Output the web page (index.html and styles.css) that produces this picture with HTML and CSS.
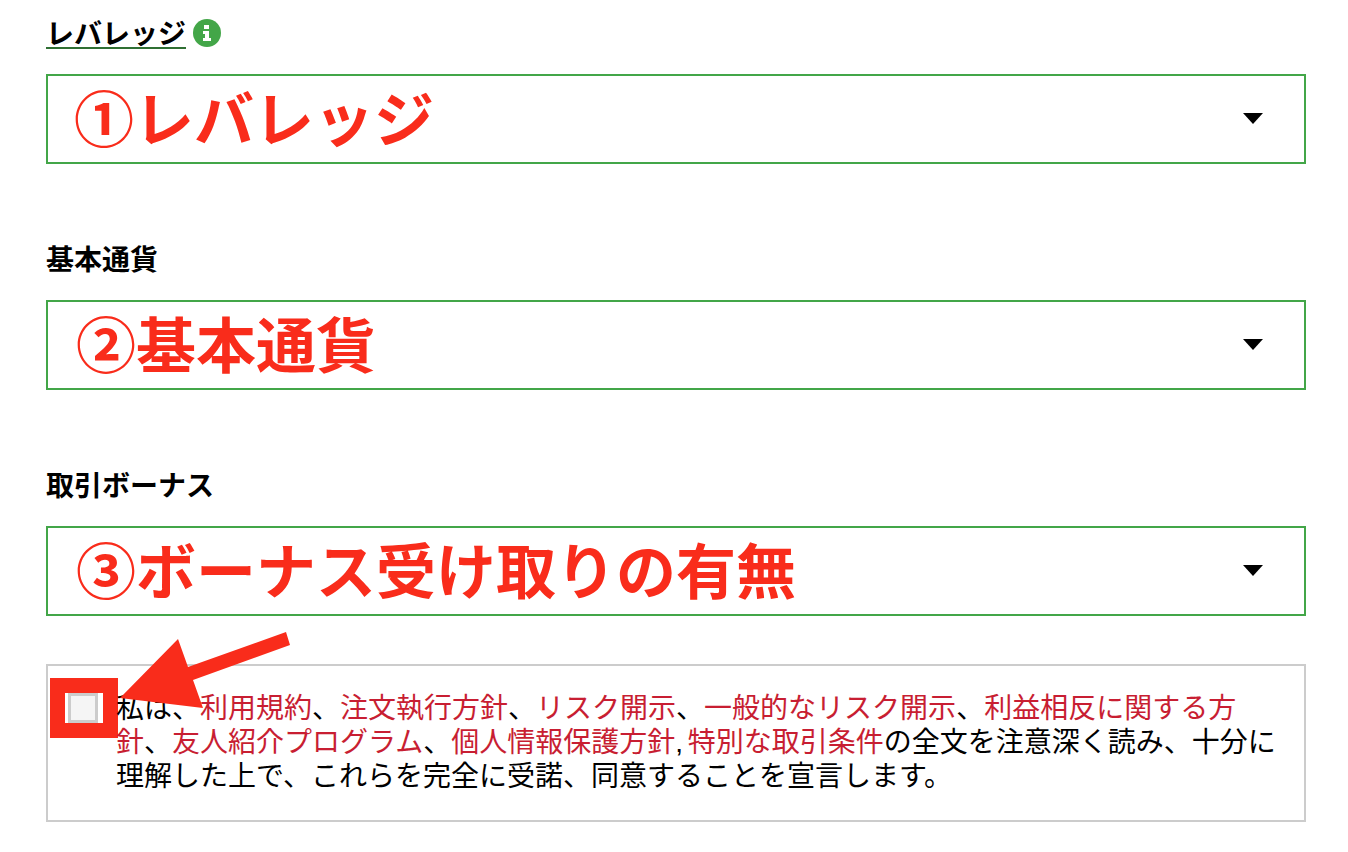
FILE: index.html
```html
<!DOCTYPE html>
<html lang="ja">
<head>
    <meta charset="UTF-8">
    <title>口座開設</title>
    <link rel="stylesheet" href="styles.css">
</head>
<body>
    <div class="form">
        <div class="field">
            <div class="field-label">
                <span class="label-text underlined">レバレッジ</span>
                <svg class="info-icon" viewBox="0 0 28 28">
                    <circle cx="14" cy="14" r="14" fill="#43a648"/>
                    <rect x="11" y="6" width="5" height="4" fill="#fff"/>
                    <path d="M10 12h6v7h2v3h-8v-3h2v-4h-2z" fill="#fff"/>
                </svg>
            </div>
            <div class="select-box">
                <span class="note note-first">①レバレッジ</span>
                <span class="caret"></span>
            </div>
        </div>

        <div class="field">
            <div class="field-label">
                <span class="label-text">基本通貨</span>
            </div>
            <div class="select-box">
                <span class="note">②基本通貨</span>
                <span class="caret"></span>
            </div>
        </div>

        <div class="field field-last">
            <div class="field-label">
                <span class="label-text">取引ボーナス</span>
            </div>
            <div class="select-box">
                <span class="note">③ボーナス受け取りの有無</span>
                <span class="caret"></span>
            </div>
        </div>

        <div class="agree-box">
            <span class="check"><span class="check-input"></span></span>
            <p class="agree-text">私は、<a href="#">利用規約</a>、<a href="#">注文執行方針</a>、<a href="#">リスク開示</a>、<a href="#">一般的なリスク開示</a>、<a href="#">利益相反に関する方針</a>、<a href="#">友人紹介プログラム</a>、<a href="#">個人情報保護方針</a>, <a href="#">特別な取引条件</a>の全文を注意深く読み、十分に理解した上で、これらを完全に受諾、同意することを宣言します。</p>
        </div>
    </div>

    <!-- Arrow pointing at the checkbox -->
    <svg class="arrow" width="1348" height="852" viewBox="0 0 1348 852">
        <polygon points="120,698 178,639 188,667 286,632 290,645 193,680 203,708" fill="#f92c1b"/>
    </svg>
</body>
</html>
```

FILE: styles.css
```css
body {
    margin: 0;
    background-color: #fff;
    color: #000;
    font-family: "Liberation Sans", "Noto Sans CJK JP", sans-serif;
}

.form {
    width: 1260px;
    margin-left: 46px;
    padding-top: 23px;
}

.field {
    margin-bottom: 85px;
}

.field-last {
    margin-bottom: 48px;
}

.field-label {
    display: flex;
    align-items: flex-start;
    gap: 7px;
    height: 34px;
    margin-bottom: 17px;
}

.label-text {
    font-size: 28px;
    line-height: 24px;
    font-weight: 700;
}

.underlined {
    border-bottom: 2px solid #2f6f33;
}

.info-icon {
    width: 28px;
    height: 28px;
    margin-top: -4px;
}

.select-box {
    display: flex;
    align-items: center;
    justify-content: space-between;
    box-sizing: border-box;
    height: 90px;
    padding: 0 41px 0 28px;
    border: 2px solid #43a648;
}

.note {
    padding-top: 6px;
    font-size: 60px;
    font-weight: 700;
    line-height: 80px;
    color: #f92c1b;
}

.note-first {
    margin-left: -2px;
}

.caret {
    width: 0;
    height: 0;
    margin-top: -1px;
    border-left: 10px solid transparent;
    border-right: 10px solid transparent;
    border-top: 11px solid #000;
}

.agree-box {
    display: flex;
    align-items: flex-start;
    box-sizing: border-box;
    height: 158px;
    padding: 27px 24px 0 17px;
    border: 2px solid #ccc;
}

.check {
    flex: none;
    box-sizing: border-box;
    width: 38px;
    height: 30px;
    padding-left: 3px;
    background-color: #fff;
    outline: 15px solid #f92c1b;
}

.check-input {
    display: block;
    box-sizing: border-box;
    width: 30px;
    height: 30px;
    background-color: #f5f5f5;
    border: 3px solid #ccc;
}

.agree-text {
    margin: -1px 0 0 13px;
    font-size: 28px;
    line-height: 34px;
    word-spacing: -3px;
}

.agree-text a {
    color: #c81e32;
    text-decoration: none;
}

.arrow {
    position: absolute;
    top: 0;
    left: 0;
    pointer-events: none;
}
```
